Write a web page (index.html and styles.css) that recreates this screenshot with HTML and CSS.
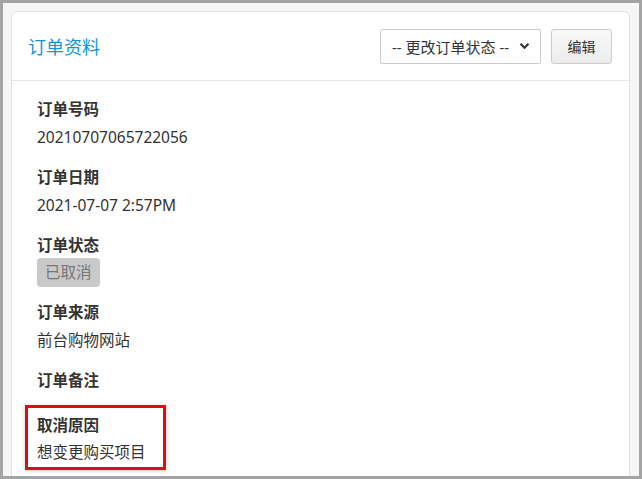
FILE: index.html
```html
<!DOCTYPE html>
<html lang="zh-CN">
<head>
  <meta charset="UTF-8" />
  <meta name="viewport" content="width=device-width, initial-scale=1.0"/>
  <title>订单资料</title>
  <link rel="stylesheet" href="styles.css">
</head>
<body>
  <div class="frame">
    <div class="panel">
      <div class="panel-head">
        <h3 class="panel-title">订单资料</h3>
        <div class="head-tools">
          <div class="select-box">
            <span>-- 更改订单状态 --</span>
            <svg class="chevron" width="11" height="8" viewBox="0 0 11 8">
              <path d="M1.5 1.8 L5.5 5.8 L9.5 1.8" fill="none" stroke="#333" stroke-width="2.2"/>
            </svg>
          </div>
          <button type="button" class="edit-btn">编辑</button>
        </div>
      </div>

      <div class="panel-body">
        <div class="field">
          <div class="field-label">订单号码</div>
          <div class="field-value">20210707065722056</div>
        </div>
        <div class="field">
          <div class="field-label">订单日期</div>
          <div class="field-value">2021-07-07 2:57PM</div>
        </div>
        <div class="field field-status">
          <div class="field-label">订单状态</div>
          <div class="field-value"><span class="badge">已取消</span></div>
        </div>
        <div class="field">
          <div class="field-label">订单来源</div>
          <div class="field-value">前台购物网站</div>
        </div>
        <div class="field">
          <div class="field-label">订单备注</div>
        </div>
        <div class="field highlight">
          <div class="field-label">取消原因</div>
          <div class="field-value">想变更购买项目</div>
        </div>
      </div>
    </div>
  </div>
</body>
</html>
```

FILE: styles.css
```css
* {
  box-sizing: border-box;
}

body {
  margin: 0;
  font-family: "Noto Sans", "Noto Sans CJK SC", sans-serif;
  color: #333;
}

.frame {
  width: 642px;
  height: 479px;
  border: 3px solid #a4a4a4;
  background-color: #f6f6f6;
  padding: 8px 9px 0 8px;
  overflow: hidden;
}

.panel {
  background-color: white;
  border: 1px solid #e3e3e3;
  border-radius: 6px;
  height: 520px;
}

.panel-head {
  display: flex;
  align-items: center;
  justify-content: space-between;
  height: 69px;
  padding: 0 17px 0 16px;
  border-bottom: 1px solid #e8e8e8;
}

.panel-title {
  margin: 0;
  font-size: 18px;
  font-weight: normal;
  color: #1196dc;
}

.head-tools {
  display: flex;
  align-items: center;
  gap: 10px;
}

.select-box {
  width: 161px;
  height: 35px;
  border: 1px solid #ccc;
  border-radius: 2px;
  display: flex;
  align-items: center;
  justify-content: space-between;
  padding: 0 10px 0 11px;
  font-size: 15px;
  color: #333;
}

.chevron {
  display: block;
}

.edit-btn {
  width: 61px;
  height: 35px;
  border: 1px solid #ccc;
  border-radius: 3px;
  background: linear-gradient(#fafafa, #ebebeb);
  font-family: inherit;
  font-size: 14px;
  color: #333;
  padding: 0;
}

.panel-body {
  padding: 16px 25px;
}

.field {
  margin-bottom: 16px;
}

.field-label {
  font-size: 15.5px;
  font-weight: bold;
  line-height: 24px;
  color: #333;
}

.field-value {
  font-size: 15.5px;
  line-height: 24px;
  margin-top: 4px;
  color: #333;
}

.field-status {
  margin-bottom: 13px;
}

.field-status .field-value {
  margin-top: 1px;
  line-height: 29px;
  height: 29px;
}

.badge {
  display: inline-block;
  background-color: #c9c9c9;
  color: #777;
  border-radius: 4px;
  padding: 0 8px;
  line-height: 29px;
  vertical-align: top;
}

.highlight {
  margin-left: -12px;
  margin-top: -3px;
  width: 141px;
  border: 3px solid #e8090c;
  padding: 5px 9px 3px;
  box-shadow: 0 1px 4px rgba(0, 0, 0, 0.2);
}

.highlight .field-value {
  margin-top: 3px;
}
```
